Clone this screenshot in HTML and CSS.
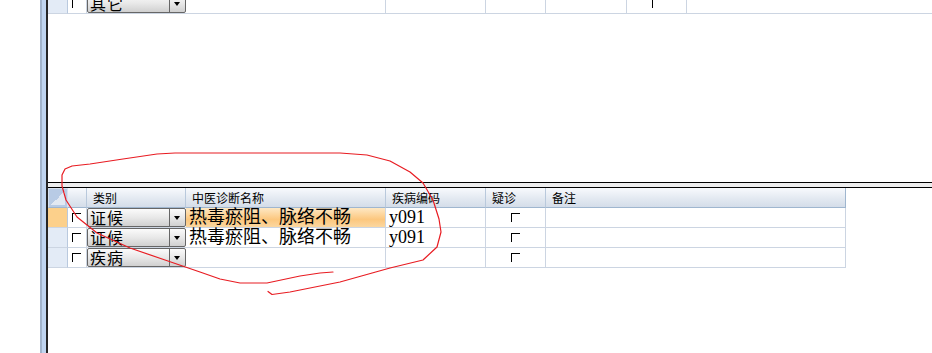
FILE: index.html
```html
<!DOCTYPE html>
<html lang="zh-CN">
<head>
  <meta charset="UTF-8">
  <title>中医诊断</title>
  <link rel="stylesheet" href="styles.css">
</head>
<body>
  <div class="screen">
    <div class="gutter"></div>
    <div class="edge"></div>

    <div class="pane">
      <!-- upper grid, scrolled so only the last row shows -->
      <div class="upper">
        <div class="row upper-row">
          <div class="rh"></div>
          <div class="cell chk"><span class="box"></span></div>
          <div class="cell combo-cell">
            <div class="combo"><span class="val">其它</span><span class="btn"></span></div>
          </div>
          <div class="cell"></div>
          <div class="cell"></div>
          <div class="cell"></div>
          <div class="cell"></div>
          <div class="cell chk center"><span class="box"></span></div>
          <div class="cell last"></div>
        </div>
      </div>

      <div class="splitter"></div>

      <!-- lower grid -->
      <div class="grid">
        <div class="row head">
          <div class="corner"><span class="tri"></span></div>
          <div class="hc"></div>
          <div class="hc">类别</div>
          <div class="hc">中医诊断名称</div>
          <div class="hc">疾病编码</div>
          <div class="hc">疑诊</div>
          <div class="hc end">备注</div>
        </div>

        <div class="row body current">
          <div class="rh"></div>
          <div class="cell chk"><span class="box"></span></div>
          <div class="cell combo-cell">
            <div class="combo"><span class="val">证候</span><span class="btn"></span></div>
          </div>
          <div class="cell txt active">热毒瘀阻、脉络不畅</div>
          <div class="cell txt">y091</div>
          <div class="cell chk center"><span class="box"></span></div>
          <div class="cell end"></div>
        </div>

        <div class="row body">
          <div class="rh"></div>
          <div class="cell chk"><span class="box"></span></div>
          <div class="cell combo-cell">
            <div class="combo"><span class="val">证候</span><span class="btn"></span></div>
          </div>
          <div class="cell txt">热毒瘀阻、脉络不畅</div>
          <div class="cell txt">y091</div>
          <div class="cell chk center"><span class="box"></span></div>
          <div class="cell end"></div>
        </div>

        <div class="row body">
          <div class="rh"></div>
          <div class="cell chk"><span class="box"></span></div>
          <div class="cell combo-cell">
            <div class="combo"><span class="val">疾病</span><span class="btn"></span></div>
          </div>
          <div class="cell txt"></div>
          <div class="cell txt"></div>
          <div class="cell chk center"><span class="box"></span></div>
          <div class="cell end"></div>
        </div>
      </div>
    </div>

    <!-- red pen mark drawn over the grid -->
    <svg class="ink" width="932" height="353" viewBox="0 0 932 353">
      <polyline points="333,272 320,273 300,276 267,283 240,283 220,279 200,272 165,260 130,248 97,233 77,217 66,200 62,186 62,175 65,169 72,166 90,164 123,159 157,154 175,153 260,153 340,153 367,155 390,161 410,172 423,183 433,200 439,219 441,232 437,247 423,260 390,268 340,282 290,292 272,294.5 268,291.5"/>
    </svg>
  </div>
</body>
</html>
```

FILE: styles.css
```css
:root {
  --line: #ccd5e2;
  --head-line: #9fb6cf;
  --row-head: #e3ebf6;
  --row-head-line: #b9c9de;
  --current: #fcd08b;
}
body {
  margin: 0;
  background: #fff;
  font-family: "Noto Sans CJK SC", sans-serif;
  color: #000;
}
.screen {
  position: relative;
  display: flex;
  width: 932px;
  height: 353px;
  overflow: hidden;
}
.gutter {
  width: 40px;
  flex: none;
}
.edge {
  width: 8px;
  flex: none;
  box-sizing: border-box;
  background: #c0d5f0;
  border-left: 2px solid #a2b4cc;
  border-right: 2px solid #262626;
}
.pane {
  flex: 1;
  display: flex;
  flex-direction: column;
}
.upper {
  height: 182px;
  overflow: hidden;
}
.row {
  display: grid;
  height: 20px;
}
.upper-row {
  margin-top: -6px;
  grid-template-columns: 20px 19px 99px 200px 100px 60px 81px 60px 1fr;
}
.grid .row {
  grid-template-columns: 20px 19px 99px 200px 100px 60px 300px;
  width: 798px;
}
.splitter {
  height: 6px;
  box-sizing: border-box;
  border-top: 1px solid #000;
  border-bottom: 1px solid #000;
  background: #ededed;
}
.cell, .rh {
  box-sizing: border-box;
  border-right: 1px solid var(--line);
  border-bottom: 1px solid var(--line);
}
.rh {
  background: var(--row-head);
  border-right-color: var(--row-head-line);
}
.current .rh {
  background: var(--current);
}
.cell.last {
  border-right: none;
}
.chk {
  padding: 5px 0 0 4px;
}
.chk.center {
  padding-left: 25px;
}
.box {
  display: block;
  width: 9px;
  height: 9px;
  box-sizing: border-box;
  border-top: 1px solid #000;
  border-left: 1px solid #000;
}
.combo-cell {
  border-right: none;
}
.combo {
  display: flex;
  height: 19px;
  box-sizing: border-box;
  border: 1px solid #666;
  border-radius: 2px;
  background: linear-gradient(#fbfbfb, #e8e8e8 50%, #d0d0d0);
}
.val {
  flex: 1;
  padding-left: 2px;
  font-size: 16px;
  letter-spacing: 1px;
  line-height: 17px;
  white-space: nowrap;
}
.btn {
  position: relative;
  width: 15px;
  border-left: 1px solid #666;
}
.btn::after {
  content: "";
  position: absolute;
  left: 4px;
  top: 7px;
  border-left: 3.5px solid transparent;
  border-right: 3.5px solid transparent;
  border-top: 4px solid #000;
}
.txt {
  padding-left: 3px;
  font-family: "Liberation Serif", "Noto Sans CJK SC", serif;
  font-size: 18px;
  line-height: 19px;
  white-space: nowrap;
}
.txt.active {
  background: linear-gradient(#fee8c4, #fcc77e 60%, #fbd7a0);
}
.head .hc {
  box-sizing: border-box;
  padding-left: 6px;
  font-size: 12px;
  line-height: 19px;
  background: linear-gradient(#f8fafd, #e3e9f1 55%, #d4dde9);
  border-right: 1px solid #b9c9dc;
  border-bottom: 1px solid var(--head-line);
}
.head .hc.end {
  border-right-color: var(--head-line);
}
.corner {
  position: relative;
  box-sizing: border-box;
  background: #b8cbe5;
  border: 1px solid #d6e1ef;
  border-bottom-color: var(--head-line);
}
.tri {
  position: absolute;
  right: 2px;
  bottom: 2px;
  width: 14px;
  height: 14px;
  background: linear-gradient(to bottom right, transparent 50%, #e2e9f3 50%);
}
.ink {
  position: absolute;
  left: 0;
  top: 0;
  pointer-events: none;
}
.ink polyline {
  fill: none;
  stroke: #e81c22;
  stroke-width: 1.2;
  stroke-linejoin: round;
  stroke-linecap: round;
}
```
